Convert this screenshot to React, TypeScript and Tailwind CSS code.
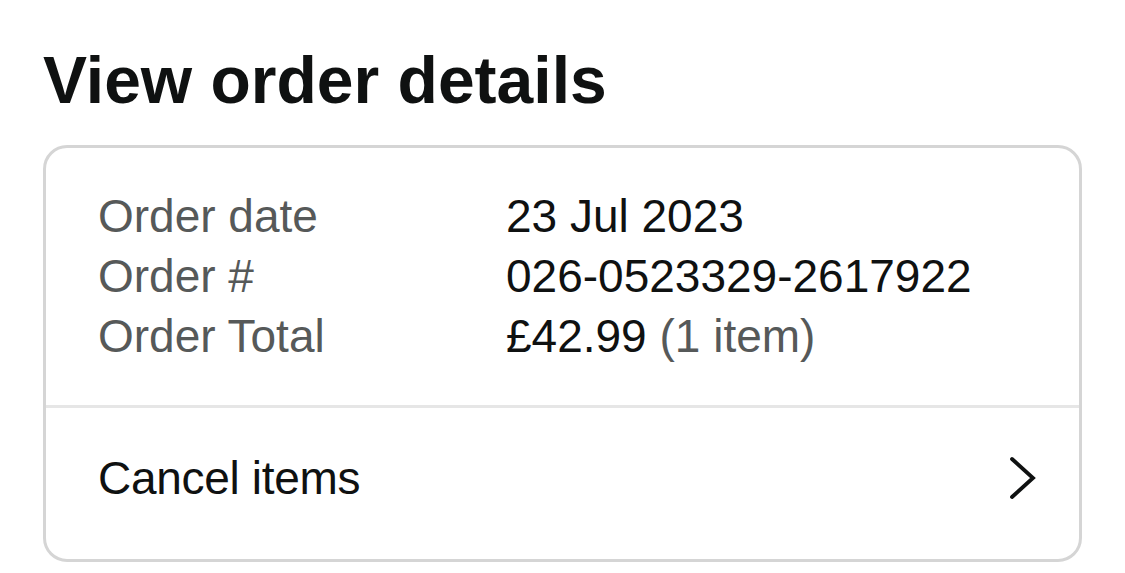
export default function App() {
  const rows = [
    { label: 'Order date', value: '23 Jul 2023' },
    { label: 'Order #', value: '026-0523329-2617922' },
    { label: 'Order Total', value: '£42.99', extra: '(1 item)' },
  ];

  return (
    <div className="w-[1125px] h-[573px] bg-white overflow-hidden font-['Liberation_Sans',Arial,sans-serif] text-[#0f1111]">
      <h1 className="pl-[43px] pt-[47px] text-[66px] leading-[66px] font-bold">View order details</h1>

      <div className="mx-[43px] mt-[32px] w-[1039px] border-[3px] border-[#d5d5d5] rounded-[24px]">
        <div className="pl-[52px] pt-[38px] pb-[39px]">
          {rows.map((row) => (
            <div key={row.label} className="flex text-[46px] leading-[60px]">
              <div className="w-[408px] text-[#565959]">{row.label}</div>
              <div>
                {row.value}
                {row.extra && <span className="text-[#565959]"> {row.extra}</span>}
              </div>
            </div>
          ))}
        </div>

        <div className="h-[3px] bg-[#e6e6e6]" />

        <div className="flex items-center justify-between pl-[52px] pr-[43px] pt-[40px] pb-[51px]">
          <span className="text-[46px] leading-[60px] tracking-[-0.3px]">Cancel items</span>
          <svg width="27" height="44" viewBox="0 0 27 44" fill="none">
            <polyline
              points="3,3 24,22 3,41"
              stroke="#0f1111"
              strokeWidth="3.8"
              strokeLinecap="round"
              strokeLinejoin="miter"
            />
          </svg>
        </div>
      </div>
    </div>
  );
}
